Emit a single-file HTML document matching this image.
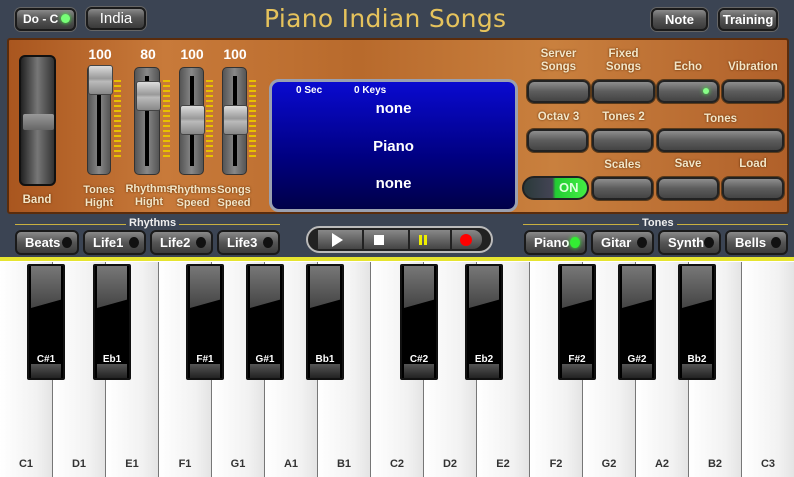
<!DOCTYPE html>
<html><head><meta charset="utf-8"><style>
*{margin:0;padding:0;box-sizing:border-box}
body{width:794px;height:477px;overflow:hidden;background:#3b4453;font-family:"Liberation Sans",sans-serif;position:relative}
.a{position:absolute}
.tb{position:absolute;height:23px;border-radius:6px;background:linear-gradient(#8a8a8a,#555 45%,#3a3a3a);border:2px solid #1b1b1b;color:#fff;font-weight:bold;font-size:13px;text-align:center;line-height:19px;box-shadow:0 0 0 1px #666;white-space:nowrap}
.btn{position:absolute;height:23px;border-radius:7px;background:linear-gradient(#8e8e8e,#5c5c5c 50%,#444);border:2px solid #222;box-shadow:0 0 0 1px #5a3a1a}
.lbl{position:absolute;color:#f3e6c8;font-weight:bold;font-size:11.5px;text-align:center;line-height:13px;text-shadow:0 0 2px #5a2a00;white-space:nowrap}
.bb{position:absolute;top:230px;height:25px;border-radius:6px;background:linear-gradient(#8a8a8a,#555 50%,#3c3c3c);border:2px solid #1a1a1a;color:#fff;font-weight:bold;font-size:13px;line-height:21px;padding-left:8px}
.bb i{position:absolute;right:5px;top:5px;width:10px;height:11px;border-radius:50%;background:#111}
.trk{position:absolute;background:linear-gradient(90deg,#555,#888 50%,#555);border-radius:5px;border:1px solid #333}
.trk:after{content:"";position:absolute;left:50%;margin-left:-2px;top:8px;bottom:8px;width:4px;background:#000}
.th{position:absolute;width:25px;height:30px;border-radius:3px;background:linear-gradient(#ddd,#999 45%,#bbb 55%,#888);border:1px solid #444;z-index:2}
.tick{position:absolute;width:7px;background:repeating-linear-gradient(#e8c000 0 2px,transparent 2px 5px)}
.val{position:absolute;color:#fff;font-weight:bold;font-size:14px;text-align:center;width:40px}
.wk{position:absolute;top:262px;height:215px;border-right:1px solid #777;background:linear-gradient(90deg,#fff,#f2f2f2 70%,#e4e4e4);font-size:11px;font-weight:bold;color:#333;text-align:center;padding-top:196px}
.bk{position:absolute;top:264px;width:38px;height:116px;background:#000;border:2px solid #111;border-radius:2px;color:#fff;font-size:10px;font-weight:bold;text-align:center;padding-top:88px}
.bk:before{content:"";position:absolute;left:2px;right:2px;top:0;height:42px;background:linear-gradient(#777,#444);clip-path:polygon(0 0,100% 0,100% 80%,0 100%)}
.bk:after{content:"";position:absolute;left:2px;right:2px;bottom:0;height:14px;background:linear-gradient(#555,#222)}
</style></head><body>
<div class="tb" style="left:15px;top:8px;width:61px;text-align:left;padding-left:6px;font-size:12px">Do - C<span class="a" style="right:4px;top:4px;width:9px;height:9px;border-radius:50%;background:#7f7;box-shadow:0 0 4px #4f4"></span></div>
<div class="tb" style="left:86px;top:7px;width:60px;font-size:15px;font-weight:normal">India</div>
<div class="a" style="left:264px;top:4px;font-size:25px;color:#e6c35c;letter-spacing:0.3px;font-family:'DejaVu Sans',sans-serif">Piano Indian Songs</div>
<div class="tb" style="left:651px;top:8px;width:57px">Note</div>
<div class="tb" style="left:718px;top:8px;width:60px">Training</div>

<div class="a" style="left:7px;top:38px;width:782px;height:176px;background:linear-gradient(90deg,#a9561f,#c87a3a 20%,#b86a2c 45%,#c9803e 70%,#b0602a);border:2px solid #5a2c0c;border-radius:3px"></div>

<div class="a" style="left:19px;top:55px;width:37px;height:131px;background:linear-gradient(90deg,#222,#777 50%,#333);border:2px solid #111;border-radius:6px"></div>
<div class="a" style="left:23px;top:114px;width:31px;height:16px;background:linear-gradient(#999,#666);border-radius:2px"></div>
<div class="lbl" style="left:17px;top:194px;width:40px">Band</div>

<div class="val" style="left:80px;top:46px">100</div>
<div class="val" style="left:128px;top:46px">80</div>
<div class="val" style="left:172px;top:46px">100</div>
<div class="val" style="left:215px;top:46px">100</div>
<div class="trk" style="left:87px;top:65px;width:24px;height:110px"></div><div class="th" style="left:88px;top:65px"></div><div class="tick" style="left:114px;top:80px;height:80px"></div>
<div class="trk" style="left:134px;top:67px;width:26px;height:108px"></div><div class="th" style="left:136px;top:81px"></div><div class="tick" style="left:163px;top:80px;height:80px"></div>
<div class="trk" style="left:179px;top:67px;width:25px;height:108px"></div><div class="th" style="left:180px;top:105px"></div><div class="tick" style="left:206px;top:80px;height:80px"></div>
<div class="trk" style="left:222px;top:67px;width:25px;height:108px"></div><div class="th" style="left:223px;top:105px"></div><div class="tick" style="left:249px;top:80px;height:80px"></div>
<div class="lbl" style="left:78px;top:184px;width:42px;font-size:11px">Tones<br>Hight</div>
<div class="lbl" style="left:124px;top:183px;width:50px;font-size:11px">Rhythms<br>Hight</div>
<div class="lbl" style="left:168px;top:184px;width:50px;font-size:11px">Rhythms<br>Speed</div>
<div class="lbl" style="left:213px;top:184px;width:42px;font-size:11px">Songs<br>Speed</div>

<div class="a" style="left:269px;top:79px;width:249px;height:133px;border-radius:10px;background:linear-gradient(#0a0ad0,#000080 60%,#000048);border:3px solid #9aa0b0;color:#fff;font-weight:bold">
<div class="a" style="left:24px;top:3px;font-size:10px">0 Sec</div><div class="a" style="left:82px;top:3px;font-size:10px">0 Keys</div>
<div class="a" style="left:0;width:243px;top:18px;text-align:center;font-size:15px">none</div>
<div class="a" style="left:0;width:243px;top:56px;text-align:center;font-size:15px">Piano</div>
<div class="a" style="left:0;width:243px;top:93px;text-align:center;font-size:15px">none</div>
</div>

<div class="lbl" style="left:527px;top:48px;width:63px">Server<br>Songs</div>
<div class="lbl" style="left:592px;top:48px;width:63px">Fixed<br>Songs</div>
<div class="lbl" style="left:657px;top:61px;width:62px">Echo</div>
<div class="lbl" style="left:722px;top:61px;width:62px">Vibration</div>
<div class="btn" style="left:527px;top:80px;width:63px"></div>
<div class="btn" style="left:592px;top:80px;width:63px"></div>
<div class="btn" style="left:657px;top:80px;width:62px"><span class="a" style="right:8px;top:6px;width:6px;height:6px;border-radius:50%;background:#8f8;box-shadow:0 0 5px #4f4"></span></div>
<div class="btn" style="left:722px;top:80px;width:62px"></div>
<div class="lbl" style="left:527px;top:111px;width:63px">Octav 3</div>
<div class="lbl" style="left:592px;top:111px;width:63px">Tones 2</div>
<div class="lbl" style="left:657px;top:113px;width:127px">Tones</div>
<div class="btn" style="left:527px;top:129px;width:61px"></div>
<div class="btn" style="left:592px;top:129px;width:61px"></div>
<div class="btn" style="left:657px;top:129px;width:127px"></div>
<div class="lbl" style="left:592px;top:159px;width:61px">Scales</div>
<div class="lbl" style="left:657px;top:158px;width:62px">Save</div>
<div class="lbl" style="left:722px;top:158px;width:62px">Load</div>
<div class="a" style="left:522px;top:176px;width:67px;height:24px;border-radius:12px;background:linear-gradient(90deg,#2a3a3a,#445 45%,#2c3 50%,#4e4);border:2px solid #222;color:#dfd;font-weight:bold;font-size:13px;line-height:20px;padding-left:35px">ON</div>
<div class="btn" style="left:592px;top:177px;width:61px"></div>
<div class="btn" style="left:657px;top:177px;width:62px"></div>
<div class="btn" style="left:722px;top:177px;width:62px"></div>

<div class="a" style="left:15px;top:224px;width:265px;height:1px;background:#c8b040"></div>
<div class="a" style="left:126px;top:217px;padding:0 3px;background:#3b4453;color:#eee;font-size:11px;font-weight:bold">Rhythms</div>
<div class="a" style="left:523px;top:224px;width:265px;height:1px;background:#c8b040"></div>
<div class="a" style="left:639px;top:217px;padding:0 3px;background:#3b4453;color:#eee;font-size:11px;font-weight:bold">Tones</div>
<div class="bb" style="left:15px;width:64px">Beats<i></i></div>
<div class="bb" style="left:83px;width:63px">Life1<i></i></div>
<div class="bb" style="left:150px;width:63px">Life2<i></i></div>
<div class="bb" style="left:217px;width:63px">Life3<i></i></div>
<div class="bb" style="left:524px;width:63px">Piano<i style="background:#3e3;box-shadow:0 0 5px #3f3"></i></div>
<div class="bb" style="left:591px;width:63px">Gitar<i></i></div>
<div class="bb" style="left:658px;width:63px">Synth<i></i></div>
<div class="bb" style="left:725px;width:63px">Bells<i></i></div>

<div class="a" style="left:306px;top:226px;width:187px;height:27px;border-radius:14px;background:#222;border:2px solid #bbb"></div>
<div class="a" style="left:318px;top:230px;width:44px;height:19px;background:linear-gradient(#888,#444)"></div>
<div class="a" style="left:364px;top:230px;width:44px;height:19px;background:linear-gradient(#888,#444)"></div>
<div class="a" style="left:410px;top:230px;width:40px;height:19px;background:linear-gradient(#888,#444)"></div>
<div class="a" style="left:452px;top:230px;width:30px;height:19px;background:linear-gradient(#888,#444);border-radius:0 9px 9px 0"></div>
<div class="a" style="left:332px;top:233px;width:0;height:0;border-left:11px solid #fff;border-top:7px solid transparent;border-bottom:7px solid transparent"></div>
<div class="a" style="left:374px;top:235px;width:10px;height:10px;background:#fff"></div>
<div class="a" style="left:419px;top:235px;width:3px;height:10px;background:#ee0;box-shadow:5px 0 #ee0"></div>
<div class="a" style="left:460px;top:234px;width:12px;height:12px;border-radius:50%;background:#f00"></div>

<div class="a" style="left:0;top:257px;width:794px;height:4px;background:#e6e430"></div>
<div class="a" style="left:0;top:261px;width:794px;height:216px;background:#fff"></div>
<div class="wk" style="left:0;width:53px">C1</div><div class="wk" style="left:53px;width:53px">D1</div><div class="wk" style="left:106px;width:53px">E1</div><div class="wk" style="left:159px;width:53px">F1</div><div class="wk" style="left:212px;width:53px">G1</div><div class="wk" style="left:265px;width:53px">A1</div><div class="wk" style="left:318px;width:53px">B1</div><div class="wk" style="left:371px;width:53px">C2</div><div class="wk" style="left:424px;width:53px">D2</div><div class="wk" style="left:477px;width:53px">E2</div><div class="wk" style="left:530px;width:53px">F2</div><div class="wk" style="left:583px;width:53px">G2</div><div class="wk" style="left:636px;width:53px">A2</div><div class="wk" style="left:689px;width:53px">B2</div><div class="wk" style="left:742px;width:52px;border:none">C3</div>
<div class="bk" style="left:27px">C#1</div><div class="bk" style="left:93px">Eb1</div><div class="bk" style="left:186px">F#1</div><div class="bk" style="left:246px">G#1</div><div class="bk" style="left:306px">Bb1</div><div class="bk" style="left:400px">C#2</div><div class="bk" style="left:465px">Eb2</div><div class="bk" style="left:558px">F#2</div><div class="bk" style="left:618px">G#2</div><div class="bk" style="left:678px">Bb2</div>
</body></html>
